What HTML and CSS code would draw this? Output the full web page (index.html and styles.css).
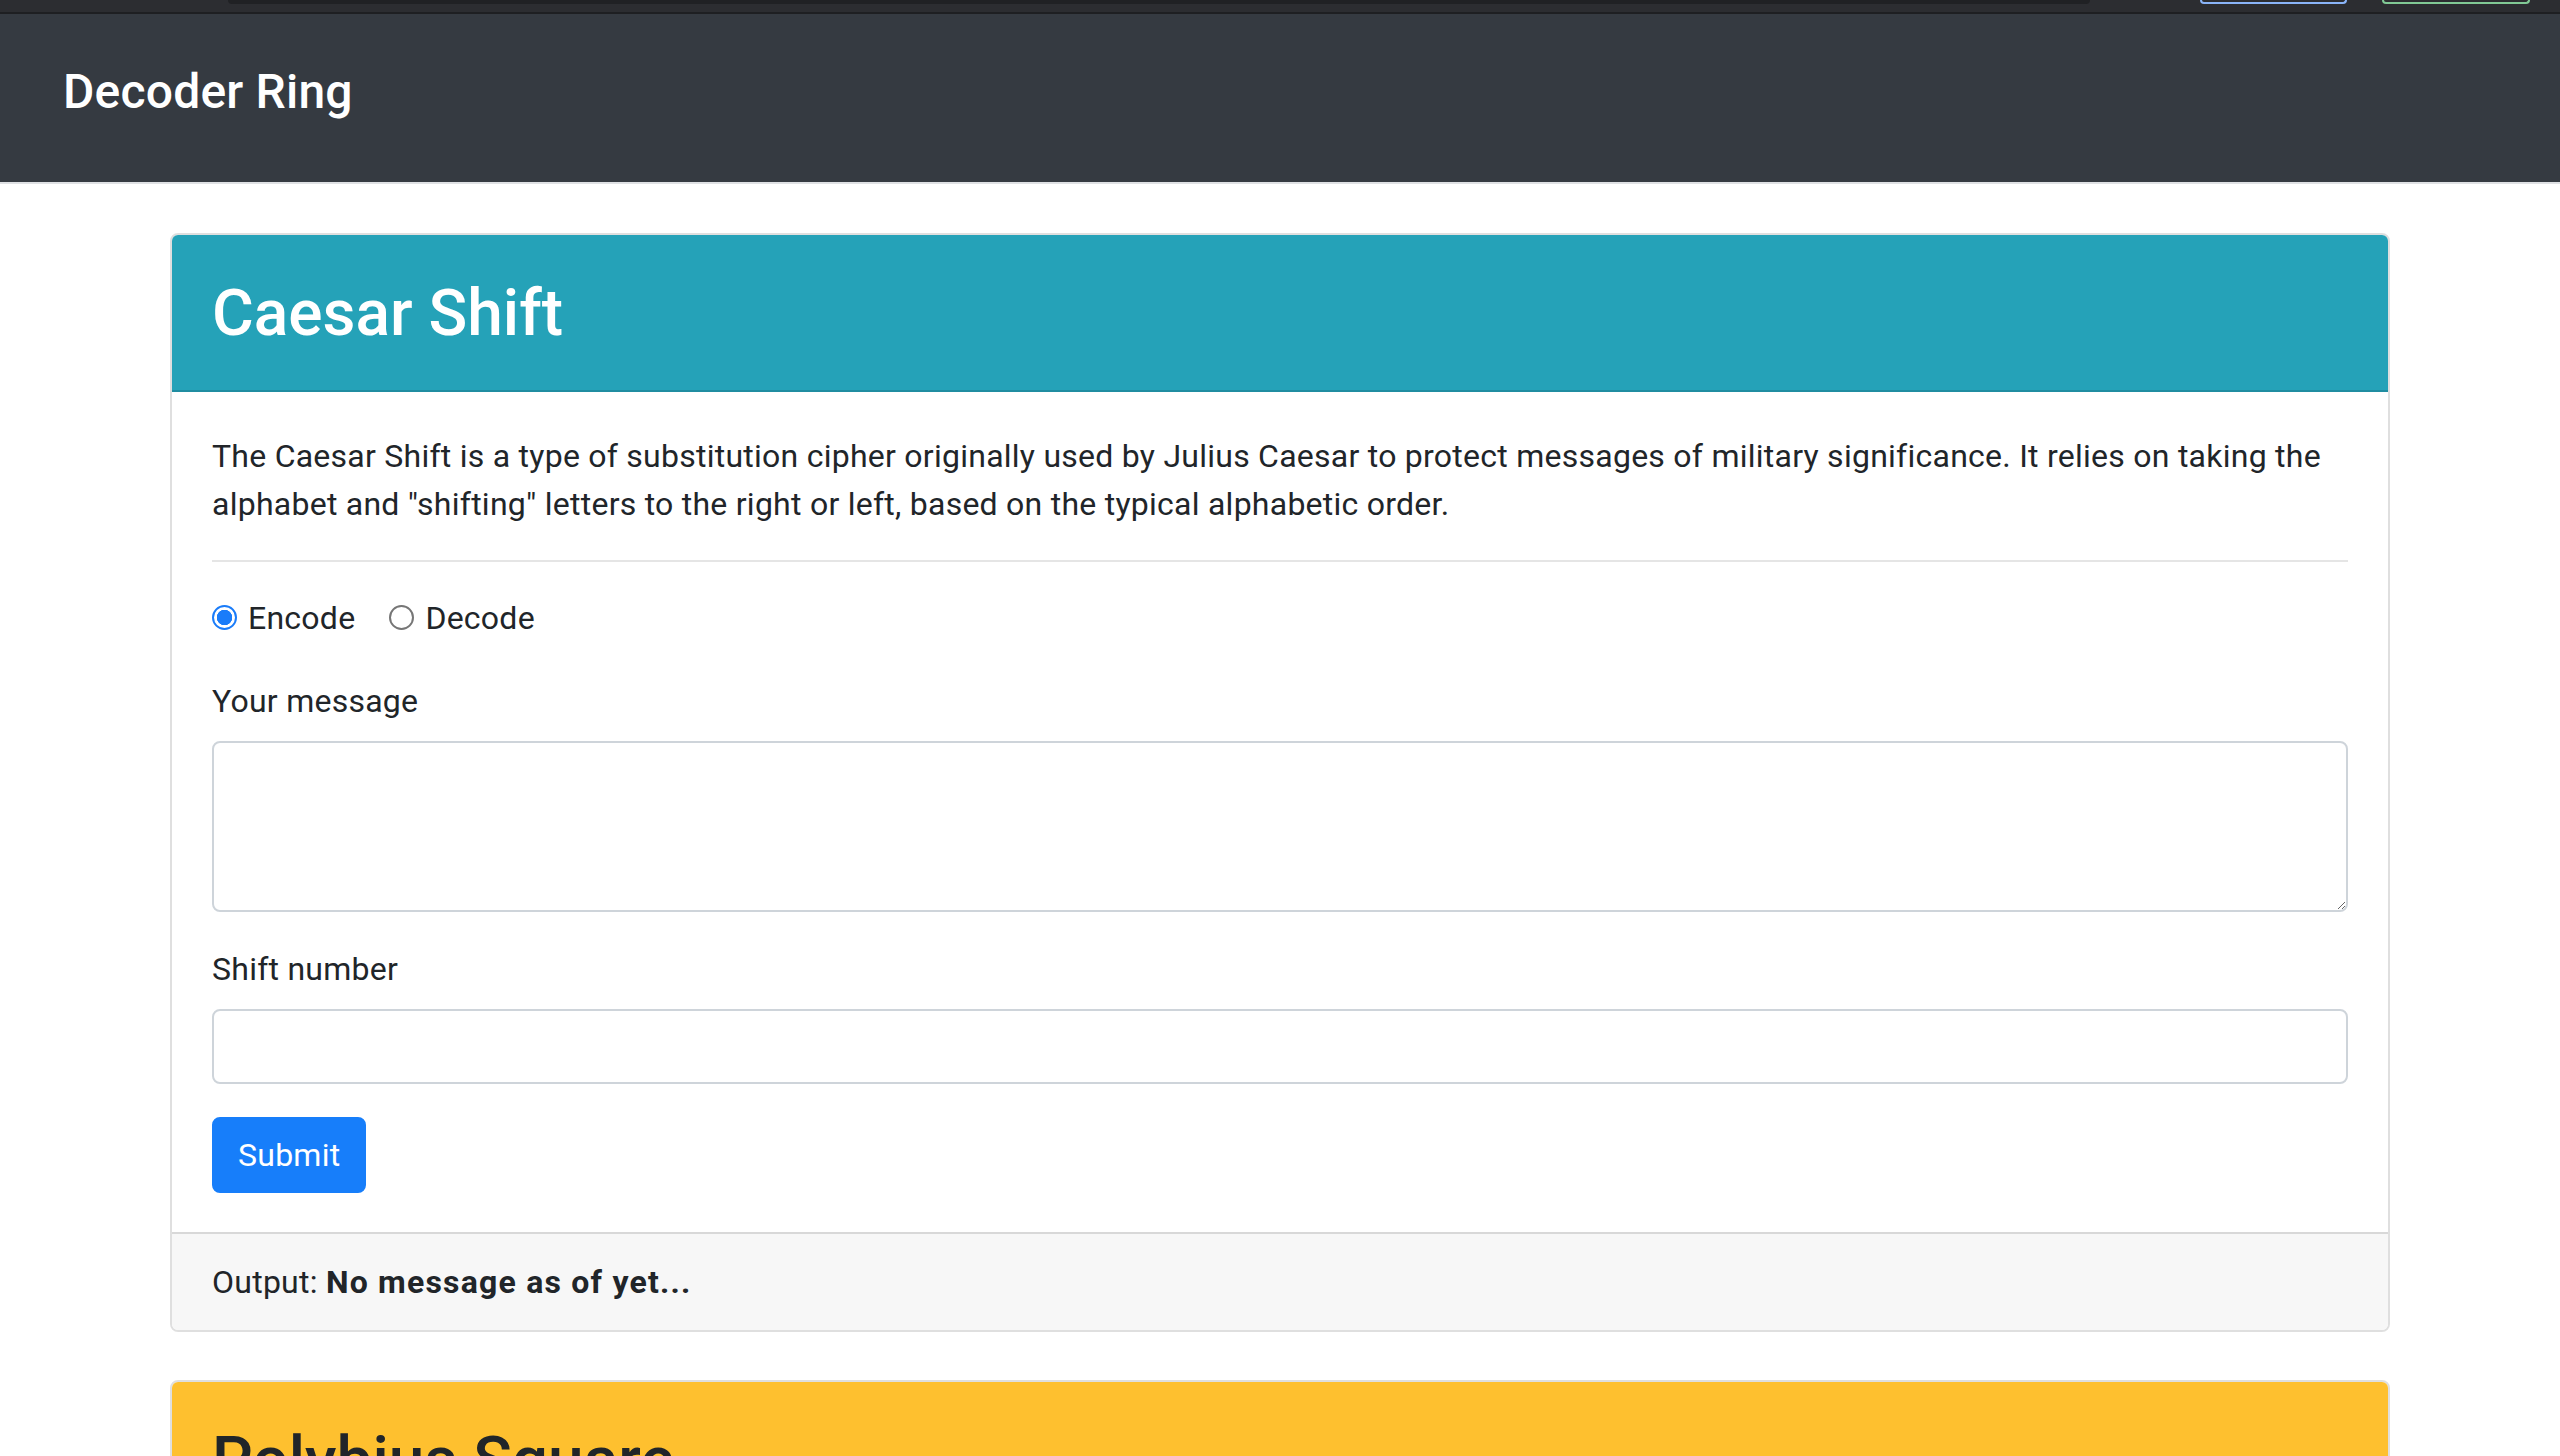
FILE: index.html
```html
<!DOCTYPE html>
<html lang="en">
<head>
<meta charset="utf-8">
<title>Decoder Ring</title>
<link rel="stylesheet" href="styles.css">
</head>
<body>
<div class="chrome">
  <div class="chrome-bar"></div>
  <div class="chrome-pill pill-blue"></div>
  <div class="chrome-pill pill-green"></div>
</div>
<nav class="navbar">
  <span class="brand">Decoder Ring</span>
</nav>
<main class="container">
  <section class="card">
    <header class="card-header header-info">
      <h2 class="card-title">Caesar Shift</h2>
    </header>
    <div class="card-body">
      <p class="intro">The Caesar Shift is a type of substitution cipher originally used by Julius Caesar to protect messages of military significance. It relies on taking the alphabet and "shifting" letters to the right or left, based on the typical alphabetic order.</p>
      <hr class="divider">
      <form class="form">
        <div class="form-group radios">
          <label class="radio-item"><span class="radio checked"></span><span>Encode</span></label>
          <label class="radio-item"><span class="radio"></span><span>Decode</span></label>
        </div>
        <div class="form-group">
          <label class="field-label" for="msg">Your message</label>
          <textarea id="msg" class="control textarea" rows="3"></textarea>
        </div>
        <div class="form-group">
          <label class="field-label" for="shift">Shift number</label>
          <input id="shift" class="control input" type="number">
        </div>
        <button type="button" class="btn">Submit</button>
      </form>
    </div>
    <footer class="card-footer">Output: <strong>No message as of yet...</strong></footer>
  </section>
  <section class="card">
    <header class="card-header header-warning">
      <h2 class="card-title dark">Polybius Square</h2>
    </header>
    <div class="card-body">
      <p class="intro">The Polybius Square is a cipher that is achieved by arranging a typical alphabet into a grid. Each letter is then represented through a coordinate.</p>
    </div>
  </section>
</main>
</body>
</html>
```
FILE: styles.css
```css
* { box-sizing: border-box; }
html, body { margin: 0; padding: 0; }
body {
  font-family: Roboto, "Noto Sans", "Liberation Sans", sans-serif;
  font-size: 32px;
  line-height: 1.5;
  letter-spacing: 0.25px;
  color: #212529;
  background: #fff;
}
.chrome {
  height: 14px;
  background: #2c2d31;
  border-bottom: 2px solid #1e1f22;
  display: flex;
  align-items: flex-start;
}
.chrome-bar {
  margin-left: 228px;
  width: 1862px;
  height: 4px;
  background: #202124;
  border-radius: 0 0 12px 12px;
}
.chrome-pill {
  height: 4px;
  border: 2px solid;
  border-top: 0;
  border-radius: 0 0 8px 8px;
}
.pill-blue { margin-left: 110px; width: 147px; border-color: #8ab4f8; }
.pill-green { margin-left: 35px; width: 148px; border-color: #81c995; }
.navbar {
  height: 170px;
  background: #353a41;
  border-bottom: 2px solid #dfe1e4;
  padding: 42px 0 0 63px;
}
.brand {
  font-size: 48px;
  font-weight: 500;
  line-height: 72px;
  letter-spacing: 0.2px;
  color: #fff;
}
.container {
  width: 2220px;
  margin: 0 auto;
  padding-top: 49px;
}
.card {
  border: 2px solid rgba(0,0,0,.125);
  border-radius: 8px;
  margin-bottom: 48px;
  overflow: hidden;
}
.card-header {
  padding: 41px 40px 37px;
  border-bottom: 2px solid rgba(0,0,0,.125);
}
.header-info { background: #25a2b8; }
.header-warning { background: #fec02f; }
.card-title {
  margin: 0;
  font-size: 64px;
  font-weight: 500;
  line-height: 1.2;
  letter-spacing: 0;
  color: #fff;
}
.card-title.dark { color: #212529; }
.card-body { padding: 40px 40px 39px; }
.intro { margin: 0 0 32px; }
.divider {
  border: 0;
  border-top: 2px solid rgba(0,0,0,.1);
  margin: 0 0 32px;
}
.form { margin: 0; }
.form-group { margin-bottom: 33px; }
.radios { display: flex; align-items: center; margin-bottom: 35px; }
.radio-item { display: flex; align-items: center; margin-right: 34px; }
.radio {
  width: 25px;
  height: 25px;
  border-radius: 50%;
  border: 2px solid #767676;
  background: #fff;
  margin-right: 11px;
  flex: none;
}
.radio.checked {
  border: 2px solid #1a7cf9;
  background: radial-gradient(circle, #1a7cf9 0 7.5px, #fff 8px);
}
.field-label { display: block; margin-bottom: 16px; }
.control {
  display: block;
  width: 100%;
  font: inherit;
  color: #495057;
  background: #fff;
  border: 2px solid #ced4da;
  border-radius: 8px;
  padding: 12px 24px;
  margin: 0;
}
.textarea { height: 171px; resize: vertical; }
.input { height: 75px; }
.btn {
  font: inherit;
  letter-spacing: 0.25px;
  color: #fff;
  background: #177efa;
  border: 2px solid #177efa;
  border-radius: 8px;
  padding: 12px 24px;
  line-height: 48px;
  height: 76px;
  margin: 0;
}
.card-footer {
  background: #f7f7f7;
  border-top: 2px solid rgba(0,0,0,.125);
  padding: 24px 40px;
}
.card-footer strong { font-weight: 700; letter-spacing: 1.2px; }
```
